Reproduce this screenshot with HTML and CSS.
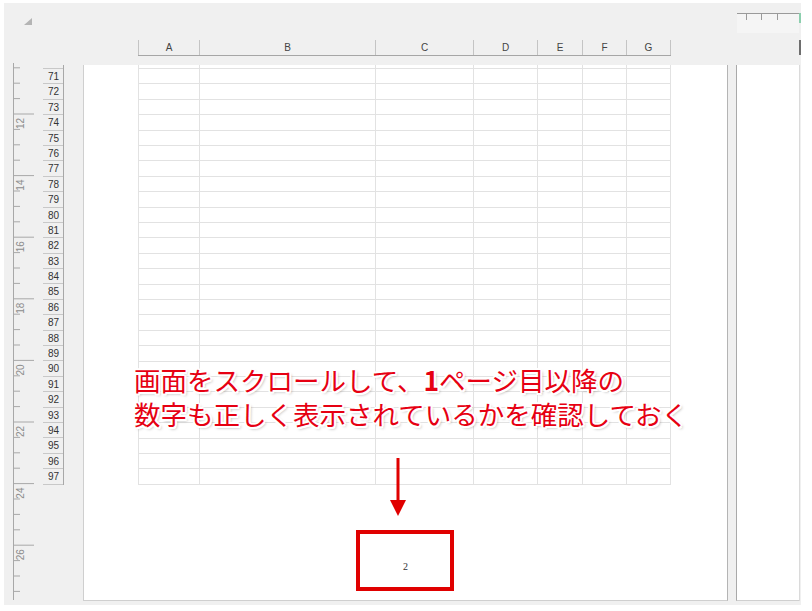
FILE: index.html
```html
<!DOCTYPE html>
<html lang="ja">
<head>
<meta charset="utf-8">
<title>Page layout</title>
<link rel="stylesheet" href="styles.css">
</head>
<body>
<div class="frame">
  <div class="corner">
    <svg class="tri" width="10" height="8" viewBox="0 0 10 8"><polygon points="9,0 9,7 1,7" fill="#b4b4b4"/></svg>
  </div>
  <div class="colhead-wrap">
    <div class="colhead">
      <div class="ch c-a">A</div>
      <div class="ch c-b">B</div>
      <div class="ch c-c">C</div>
      <div class="ch c-d">D</div>
      <div class="ch c-e">E</div>
      <div class="ch c-f">F</div>
      <div class="ch c-g">G</div>
    </div>
  </div>
  <div class="top-gap"></div>
  <div class="top-ruler">
    <svg width="63" height="62" viewBox="0 0 63 62">
      <rect x="1" y="10" width="62" height="20" fill="#f5f5f5"/>
      <path d="M1 10.5H63M10.5 10V17M25.5 10V17M41.5 10V17" stroke="#9a9a9a" stroke-width="1" fill="none"/>
    </svg>
  </div>
  <div class="top-edge">
    <svg width="2" height="62" viewBox="0 0 2 62">
      <rect x="0" y="10" width="2" height="10" fill="#8ccfae"/>
      <rect x="0" y="37" width="2" height="15" fill="#6e6e6e"/>
    </svg>
  </div>

  <div class="left">
    <svg class="ruler" width="39" height="536" viewBox="0 0 39 536">
      <path d="M9.5 -2V535" stroke="#a8a8a8" fill="none"/>
      <path stroke="#a8a8a8" fill="none" d="M9.5 2.8H16M9.5 18.2H16M9.5 33.6H16M9.5 49H30M9.5 64.4H16M9.5 79.8H16M9.5 95.2H16M9.5 110.6H30M9.5 126H16M9.5 141.4H16M9.5 156.8H16M9.5 172.2H30M9.5 187.6H16M9.5 203H16M9.5 218.4H16M9.5 233.8H30M9.5 249.2H16M9.5 264.6H16M9.5 280H16M9.5 295.4H30M9.5 310.8H16M9.5 326.2H16M9.5 341.6H16M9.5 357H30M9.5 372.4H16M9.5 387.8H16M9.5 403.2H16M9.5 418.6H30M9.5 434H16M9.5 449.4H16M9.5 464.8H16M9.5 480.2H30M9.5 495.6H16M9.5 511H16M9.5 526.4H16"/>
      <g class="rlabels">
        <text transform="translate(16 58.5) rotate(-90)">12</text>
        <text transform="translate(16 120.1) rotate(-90)">14</text>
        <text transform="translate(16 181.7) rotate(-90)">16</text>
        <text transform="translate(16 243.3) rotate(-90)">18</text>
        <text transform="translate(16 304.9) rotate(-90)">20</text>
        <text transform="translate(16 366.5) rotate(-90)">22</text>
        <text transform="translate(16 428.1) rotate(-90)">24</text>
        <text transform="translate(16 489.7) rotate(-90)">26</text>
      </g>
    </svg>
    <div class="rowhead">
      <div class="rh rh-partial"></div>
      <div class="rh">71</div><div class="rh">72</div><div class="rh">73</div>
      <div class="rh">74</div><div class="rh">75</div><div class="rh">76</div>
      <div class="rh">77</div><div class="rh">78</div><div class="rh">79</div>
      <div class="rh">80</div><div class="rh">81</div><div class="rh">82</div>
      <div class="rh">83</div><div class="rh">84</div><div class="rh">85</div>
      <div class="rh">86</div><div class="rh">87</div><div class="rh">88</div>
      <div class="rh">89</div><div class="rh">90</div><div class="rh">91</div>
      <div class="rh">92</div><div class="rh">93</div><div class="rh">94</div>
      <div class="rh">95</div><div class="rh">96</div><div class="rh">97</div>
    </div>
  </div>
  <div class="page">
    <div class="sheet">
      <div class="col c-a"></div>
      <div class="col c-b"></div>
      <div class="col c-c"></div>
      <div class="col c-d"></div>
      <div class="col c-e"></div>
      <div class="col c-f"></div>
      <div class="col c-g"></div>
    </div>
    <div class="pnum">2</div>
  </div>
  <div class="gap"></div>
  <div class="page2"></div>
  <div class="edge"></div>

  <div class="note">画面をスクロールして、<b class="one">1</b>ページ目以降の<br>数字も正しく表示されているかを確認しておく</div>
  <svg class="arrow" width="18" height="60" viewBox="0 0 18 60">
    <rect x="7.5" y="0" width="3" height="46" fill="#e00000"/>
    <polygon points="1,42 17,42 9,58" fill="#e00000"/>
  </svg>
  <div class="box"></div>
</div>
</body>
</html>
```

FILE: styles.css
```css
html, body {
  margin: 0;
  padding: 0;
  background: #ffffff;
}
body {
  width: 812px;
  height: 611px;
  overflow: hidden;
}
.frame {
  position: relative;
  margin: 3px 0 0 4px;
  width: 797px;
  height: 602px;
  background: #f0f0f0;
  display: grid;
  grid-template-columns: 79px 645px 8px 63px 2px;
  grid-template-rows: 62px 536px 4px;
  font-family: "Liberation Sans", Arial, sans-serif;
}
.corner {
  padding: 15px 0 0 19px;
}
.tri {
  display: block;
}
.colhead-wrap {
  padding: 37px 0 0 55px;
}
.colhead {
  display: flex;
  width: 533px;
  height: 16px;
  box-sizing: border-box;
  border-bottom: 1px solid #a6a6a6;
}
.ch {
  box-sizing: border-box;
  border-left: 1px solid #c4c4c4;
  display: flex;
  align-items: center;
  justify-content: center;
  font-size: 10px;
  color: #444;
}
.ch:last-child {
  border-right: 1px solid #c4c4c4;
}
.c-a { width: 61px; }
.c-b { width: 176px; }
.c-c { width: 98px; }
.c-d { width: 64px; }
.c-e { width: 45px; }
.c-f { width: 44px; }
.c-g { width: 45px; }

.top-ruler svg, .top-edge svg {
  display: block;
}

.left {
  display: flex;
  align-items: flex-start;
}
.ruler {
  display: block;
  flex: none;
  overflow: visible;
}
.rlabels text {
  font-family: "Liberation Sans", Arial, sans-serif;
  font-size: 10px;
  fill: #8c8c8c;
  text-anchor: middle;
  dominant-baseline: central;
}
.rowhead {
  width: 21px;
  flex: none;
  box-sizing: border-box;
  border-right: 1px solid #a8a8a8;
}
.rh {
  height: 15.4px;
  box-sizing: border-box;
  border-bottom: 1px solid #c8c8c8;
  font-size: 10px;
  line-height: 15px;
  text-align: right;
  padding-right: 4px;
  color: #333;
}
.rh-partial {
  height: 4px;
}

.page {
  background: #ffffff;
  box-sizing: border-box;
  border-left: 1px solid #cfcfcf;
  border-right: 1px solid #b4b4b4;
  border-bottom: 1px solid #cfcfcf;
  display: flex;
  flex-direction: column;
}
.sheet {
  display: flex;
  width: 533px;
  height: 419.8px;
  margin-left: 54px;
}
.col {
  box-sizing: border-box;
  height: 100%;
  border-left: 1px solid #e2e2e2;
  background: repeating-linear-gradient(to bottom, transparent -11.4px, transparent 3px, #e2e2e2 3px, #e2e2e2 4px);
}
.col:last-child {
  border-right: 1px solid #e2e2e2;
}
.pnum {
  margin-top: 76px;
  text-align: center;
  font-family: "Liberation Serif", "Times New Roman", serif;
  font-size: 10px;
  line-height: 12px;
  color: #333;
}
.page2 {
  background: #ffffff;
  border-left: 1px solid #a9a9a9;
  border-bottom: 1px solid #cfcfcf;
}
.edge {
  border-left: 1px solid #dadada;
}

.note {
  position: absolute;
  left: 130px;
  top: 360px;
  font-family: "Noto Sans CJK JP", "Noto Sans", sans-serif;
  font-size: 26.5px;
  line-height: 33.5px;
  font-weight: 400;
  color: #e60012;
  white-space: nowrap;
  text-shadow:
    2px 0 0 #fff, -2px 0 0 #fff, 0 2px 0 #fff, 0 -2px 0 #fff,
    1.5px 1.5px 0 #fff, -1.5px 1.5px 0 #fff, 1.5px -1.5px 0 #fff, -1.5px -1.5px 0 #fff,
    2px 2px 3px rgba(0, 0, 0, 0.35);
}
.one {
  font-weight: 700;
}
.arrow {
  position: absolute;
  left: 385px;
  top: 455px;
}
.box {
  position: absolute;
  left: 352px;
  top: 527px;
  width: 98px;
  height: 61px;
  box-sizing: border-box;
  border: 4px solid #e00000;
}
```
